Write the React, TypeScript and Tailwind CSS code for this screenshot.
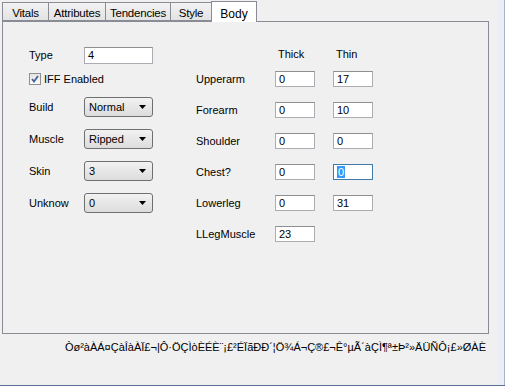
import React from 'react';

const font = { fontFamily: '"Liberation Sans", Arial, sans-serif' };

const tabs = [
  { label: 'Vitals', w: 'w-[46px]' },
  { label: 'Attributes', w: 'w-[57px]' },
  { label: 'Tendencies', w: 'w-[65px]' },
  { label: 'Style', w: 'w-[41px]' },
];

const Combo = ({ value }: { value: string }) => (
  <div className="w-[69px] h-[20px] rounded-[3px] border border-[#707070] bg-gradient-to-b from-[#f2f2f2] to-[#dcdcdc] flex items-center pl-[4px] pr-[6px] justify-between">
    <span>{value}</span>
    <svg width="7" height="4" viewBox="0 0 7 4">
      <path d="M0 0h7L3.5 4z" fill="#000" />
    </svg>
  </div>
);

const Field = ({ value, w = 'w-[40px]', h = 'h-[16px]', focus = false }: { value: string; w?: string; h?: string; focus?: boolean }) => (
  <div className={`${w} ${h} bg-white border flex items-center pl-[3px] ${focus ? 'border-[#3d7bad]' : 'border-[#abadb3] border-t-[#8e8f8f]'}`}>
    {focus ? <span className="bg-[#3399ff] text-white leading-[12px] px-[1px]">{value}</span> : <span>{value}</span>}
  </div>
);

const bodyRows = [
  { label: 'Upperarm', thick: '0', thin: '17' },
  { label: 'Forearm', thick: '0', thin: '10' },
  { label: 'Shoulder', thick: '0', thin: '0' },
  { label: 'Chest?', thick: '0', thin: '0', focus: true },
  { label: 'Lowerleg', thick: '0', thin: '31' },
  { label: 'LLegMuscle', thick: '23' },
];

export default function App() {
  return (
    <div className="w-[505px] h-[386px] bg-[#f0f0f0] text-[11px] text-black flex border-b border-[#5a6d96]" style={font}>
      <div className="w-[497px] h-full flex flex-col">
        {/* TAB STRIP */}
        <div className="flex items-end pl-[2px] h-[21px]">
          {tabs.map((t, i) => (
            <div
              key={t.label}
              className={`${t.w} h-[19px] pt-[2px] text-center bg-gradient-to-b from-[#f2f2f2] to-[#e3e3e3] border border-[#898c95] text-[11.5px] tracking-[-0.2px] ${i === tabs.length - 1 ? 'border-r-0' : 'border-r-0'}`}
            >
              {t.label}
            </div>
          ))}
          <div className="w-[46px] h-[21px] pt-[3px] text-center bg-white border border-b-0 border-[#898c95] -mb-px relative z-10 text-[12px]">
            Body
          </div>
        </div>

        {/* PANEL */}
        <div className="ml-[2px] w-[487px] h-[313px] border border-[#898c95] bg-[#f0f0f0] flex">
          {/* LEFT COLUMN */}
          <div className="pl-[26px] pt-[25px] w-[190px] flex flex-col">
            <div className="flex items-center h-[17px]">
              <span className="w-[55px]">Type</span>
              <Field value="4" w="w-[69px]" h="h-[17px]" />
            </div>
            <div className="flex items-center h-[12px] mt-[9px] gap-[3px]">
              <div className="w-[12px] h-[12px] border border-[#8f8f8f] bg-gradient-to-b from-[#e4e4e4] to-[#fafafa] flex items-center justify-center">
                <svg width="8" height="8" viewBox="0 0 8 8">
                  <path d="M1 4l2 2.5L7 1" stroke="#4a5f97" strokeWidth="1.8" fill="none" />
                </svg>
              </div>
              <span>IFF Enabled</span>
            </div>
            {[
              ['Build', 'Normal'],
              ['Muscle', 'Ripped'],
              ['Skin', '3'],
              ['Unknow', '0'],
            ].map(([l, v]) => (
              <div key={l} className="flex items-center h-[20px] mt-[12px]">
                <span className="w-[55px]">{l}</span>
                <Combo value={v} />
              </div>
            ))}
          </div>

          {/* RIGHT GRID */}
          <div className="pl-[3px] pt-[26px] flex flex-col">
            <div className="flex h-[12px] items-center">
              <span className="w-[82px]" />
              <span className="w-[58px]">Thick</span>
              <span>Thin</span>
            </div>
            {bodyRows.map((r, i) => (
              <div key={r.label} className={`flex items-center h-[16px] ${i === 0 ? 'mt-[11px]' : 'mt-[15px]'}`}>
                <span className="w-[79px]">{r.label}</span>
                <Field value={r.thick} />
                {r.thin !== undefined && (
                  <div className="ml-[18px]">
                    <Field value={r.thin} focus={r.focus} />
                  </div>
                )}
              </div>
            ))}
          </div>
        </div>

        {/* FOOTER */}
        <div className="w-[486px] text-right mt-[5px] whitespace-nowrap">
          Òø²àÀÁ¤ÇàÎàÀÏ£¬|Ô·ÖÇÌòÈÉÈ¨¡£²ÉÏãÐÐ´¦Ö¾Á¬Ç®£¬Ê°µÃ´àÇÌ¶ª±Þ²»ÄÜÑÔ¡£»ØÀÈ
        </div>
      </div>
      <div className="w-[8px] h-full bg-[#eceef6] border-r border-[#a9b4d0]" />
    </div>
  );
}
